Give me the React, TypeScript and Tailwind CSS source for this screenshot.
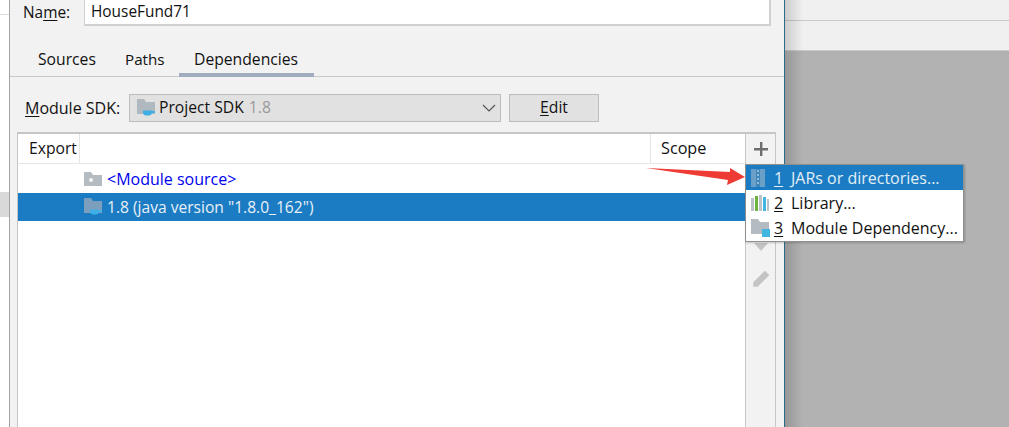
import React from "react";

const font = { fontFamily: '"Open Sans", "Noto Sans", sans-serif' };

function JdkFolder({ light = false }: { light?: boolean }) {
  return (
    <svg width="20" height="18" viewBox="0 0 20 18" className="shrink-0">
      <path d="M0 0h7l2 3h9v12H0z" fill={light ? "#7c9fbd" : "#b0b9c0"} />
      <path d="M6 11.500h9v2c0 2-1.500 3-3 3H9c-1.500 0-3-1-3-3z" fill="#3fb0e6" />
      <path d="M15 12h3v2h-3z" fill="#3fb0e6" />
    </svg>
  );
}

function SourceFolder() {
  return (
    <svg width="18" height="14" viewBox="0 0 18 14" className="shrink-0">
      <path d="M0 0h7l2 3h9v11H0z" fill="#b4bcc1" />
      <circle cx="7" cy="8" r="2" fill="#f4f5f5" />
    </svg>
  );
}

function JarIcon() {
  return (
    <svg width="14" height="18" viewBox="0 0 14 18" className="shrink-0">
      <rect x="0" y="0" width="14" height="18" fill="#6a9fc8" />
      <rect x="5" y="0" width="4" height="18" fill="#3f87bb" />
      <path d="M6 1h2v2H6zM6 5h2v2H6zM6 9h2v2H6zM6 13h2v2H6z" fill="#8fb8d6" />
    </svg>
  );
}

function LibraryIcon() {
  return (
    <svg width="18" height="16" viewBox="0 0 18 16" className="shrink-0">
      <rect x="0" y="3" width="3" height="13" fill="#bcc4c9" />
      <rect x="4" y="1" width="3" height="15" fill="#6fb33f" />
      <rect x="8" y="0" width="3" height="16" fill="#bcc4c9" />
      <rect x="12" y="2" width="3" height="14" fill="#40b6e0" />
      <rect x="16" y="4" width="2" height="12" fill="#bcc4c9" />
    </svg>
  );
}

function ModuleIcon() {
  return (
    <svg width="19" height="18" viewBox="0 0 19 18" className="shrink-0">
      <path d="M0 0h7l2 3h9v12H0z" fill="#b4bcc1" />
      <rect x="11" y="10" width="8" height="8" fill="#40b6e0" />
    </svg>
  );
}

function MenuRow({ n, label, icon, active = false }: { n: string; label: string; icon: React.ReactNode; active?: boolean }) {
  return (
    <div className={`flex h-[25px] items-center pl-[5px] ${active ? "bg-[#1b7cc3] text-[#e4eef6]" : "text-[#111]"}`}>
      <div className="flex w-[23px] justify-start">{icon}</div>
      <span className="underline underline-offset-2 w-[17px] pt-[1px]">{n}</span>
      <span className="whitespace-nowrap pt-[1px]">{label}</span>
    </div>
  );
}

export default function App() {
  return (
    <div className="relative flex h-[427px] w-[1009px] overflow-hidden bg-white text-[15.7px] text-[#111]" style={font}>
      {/* strip of the window behind, left */}
      <div className="flex w-[9px] shrink-0 flex-col">
        <div className="h-[15px] border-b border-[#dcdcdc] bg-white" />
        <div className="h-[177px]" />
        <div className="h-[25px] bg-[#d9d9d9]" />
      </div>

      {/* dialog */}
      <div className="flex w-[776px] shrink-0 flex-col border-x border-l-[#a3a3a3] border-r-[#2a6a8c] bg-[#f2f2f2]">
        <div className="flex h-[26px] items-center">
          <span className="ml-[13px] w-[61px] text-[15.4px]">
            Na<span className="underline underline-offset-2">m</span>e:
          </span>
          <div className="-mt-[1px] flex h-[26px] w-[687px] items-center border-b-2 border-r-2 border-l border-[#d0d0d0] bg-white pl-[6px] text-[15.4px]">
            HouseFund71
          </div>
        </div>

        <div className="mt-[20px] flex h-[31px] border-b border-[#c9c9c9] pl-[13px]">
          <div className="flex w-[87px] items-center pl-[15px] pb-[3px]">Sources</div>
          <div className="flex w-[69px] items-center pl-[15px] pb-[3px] text-[15.2px]">Paths</div>
          <div className="flex h-[31px] w-[135px] items-center border-b-4 border-[#a1adbe] pl-[15px] pt-[1px]">Dependencies</div>
        </div>

        <div className="mt-[17px] flex h-[28px] items-center">
          <span className="ml-[15px] w-[104px] whitespace-nowrap text-[16px]">
            <span className="underline underline-offset-2">M</span>odule SDK:
          </span>
          <div className="flex h-[28px] w-[372px] items-center border border-[#bcbcbc] bg-[#e1e1e1] pl-[7px]">
            <JdkFolder />
            <span className="ml-[2px]">Project SDK</span>
            <span className="ml-[5px] text-[#9a9a9a]">1.8</span>
            <svg width="14" height="8" viewBox="0 0 14 8" className="ml-auto mr-[4px]">
              <path d="M1 1l6 6 6-6" fill="none" stroke="#555" strokeWidth="1.200" />
            </svg>
          </div>
          <div className="ml-[8px] flex h-[28px] w-[90px] items-center justify-center border border-[#bcbcbc] bg-[#e1e1e1]">
            <span className="underline underline-offset-2">E</span>dit
          </div>
        </div>

        <div className="ml-[7px] mt-[10px] flex w-[759px] flex-1 border-x border-t-2 border-[#c6c6c6] bg-white">
          <div className="flex flex-1 flex-col">
            <div className="flex h-[30px] items-center border-b border-[#e6e6e6]">
              <div className="flex h-full w-[62px] items-center border-r border-[#e4e4e4] pl-[11px]">Export</div>
              <div className="h-full w-[571px] border-r border-[#e4e4e4]" />
              <div className="pl-[10px] text-[16.2px]">Scope</div>
            </div>
            <div className="flex h-[29px] items-center pl-[66px] text-[#0000ee]">
              <SourceFolder />
              <span className="ml-[5px] pt-[1px] text-[16px]">&lt;Module source&gt;</span>
            </div>
            <div className="flex h-[28px] items-center bg-[#1b7cc3] pl-[66px] text-[#e8f0f7]">
              <JdkFolder light />
              <span className="ml-[3px] pt-[1px] text-[15.6px]">1.8 (java version "1.8.0_162")</span>
            </div>
          </div>
          <div className="flex w-[30px] shrink-0 flex-col items-center border-l border-[#c6c6c6] bg-[#f2f2f2]">
            <svg width="14" height="14" viewBox="0 0 14 14" className="mt-[8px] ml-[1px]">
              <path d="M6 0h2.400v14H6zM0 6h14v2.400H0z" fill="#6e6e6e" />
            </svg>
            <svg width="14" height="8" viewBox="0 0 14 8" className="mt-[87px]">
              <path d="M0 0h14L7 8z" fill="#c4c4c4" />
            </svg>
            <svg width="20" height="20" viewBox="0 0 18 18" className="mt-[18px] ml-[1px]">
              <path d="M12.500 1.500l4 4L6 16H2v-4z" fill="#c4c4c4" />
            </svg>
          </div>
        </div>
      </div>

      {/* backdrop right */}
      <div className="flex flex-1 flex-col bg-[#b2b2b2]">
        <div className="h-[21px] border-b border-[#c9c9c9] bg-[#f0f0f0]" />
        <div className="h-[30px] border-b border-[#c9c9c9] bg-[#f0f0f0]" />
      </div>
      <div className="pointer-events-none absolute bottom-0 left-[785px] top-0 w-[18px] bg-gradient-to-r from-black/15 to-transparent" />

      {/* popup */}
      <div className="absolute left-[745px] top-[164px] w-[219px] border border-[#8f8f8f] bg-white pb-[1px] text-[16px] shadow-[1px_1px_2px_rgba(0,0,0,0.2)]">
        <MenuRow n="1" label="JARs or directories..." icon={<JarIcon />} active />
        <MenuRow n="2" label="Library..." icon={<LibraryIcon />} />
        <MenuRow n="3" label="Module Dependency..." icon={<ModuleIcon />} />
      </div>

      {/* annotation arrow */}
      <svg width="110" height="26" viewBox="0 0 110 26" className="absolute left-[642px] top-[162px]">
        <path d="M4 6 L88 10 L88 6 L103 15 L85 23 L86 18 Z" fill="#ee3b33" />
      </svg>
    </div>
  );
}
